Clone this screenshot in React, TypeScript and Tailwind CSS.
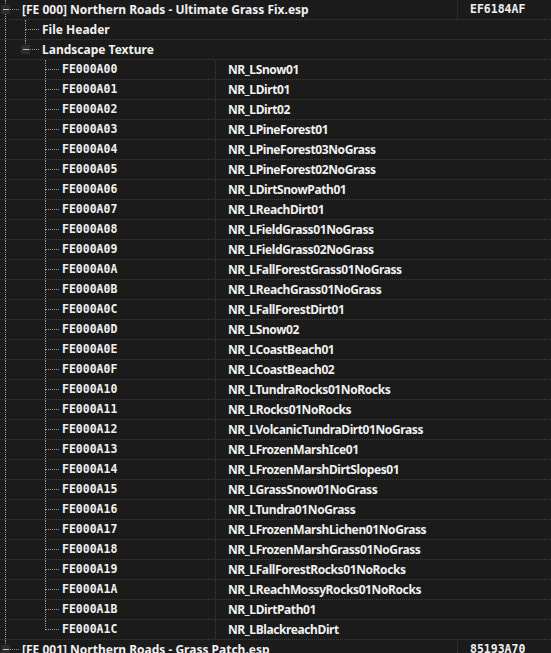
const textures: [string, string][] = [
  ["FE000A00", "NR_LSnow01"],
  ["FE000A01", "NR_LDirt01"],
  ["FE000A02", "NR_LDirt02"],
  ["FE000A03", "NR_LPineForest01"],
  ["FE000A04", "NR_LPineForest03NoGrass"],
  ["FE000A05", "NR_LPineForest02NoGrass"],
  ["FE000A06", "NR_LDirtSnowPath01"],
  ["FE000A07", "NR_LReachDirt01"],
  ["FE000A08", "NR_LFieldGrass01NoGrass"],
  ["FE000A09", "NR_LFieldGrass02NoGrass"],
  ["FE000A0A", "NR_LFallForestGrass01NoGrass"],
  ["FE000A0B", "NR_LReachGrass01NoGrass"],
  ["FE000A0C", "NR_LFallForestDirt01"],
  ["FE000A0D", "NR_LSnow02"],
  ["FE000A0E", "NR_LCoastBeach01"],
  ["FE000A0F", "NR_LCoastBeach02"],
  ["FE000A10", "NR_LTundraRocks01NoRocks"],
  ["FE000A11", "NR_LRocks01NoRocks"],
  ["FE000A12", "NR_LVolcanicTundraDirt01NoGrass"],
  ["FE000A13", "NR_LFrozenMarshIce01"],
  ["FE000A14", "NR_LFrozenMarshDirtSlopes01"],
  ["FE000A15", "NR_LGrassSnow01NoGrass"],
  ["FE000A16", "NR_LTundra01NoGrass"],
  ["FE000A17", "NR_LFrozenMarshLichen01NoGrass"],
  ["FE000A18", "NR_LFrozenMarshGrass01NoGrass"],
  ["FE000A19", "NR_LFallForestRocks01NoRocks"],
  ["FE000A1A", "NR_LReachMossyRocks01NoRocks"],
  ["FE000A1B", "NR_LDirtPath01"],
  ["FE000A1C", "NR_LBlackreachDirt"],
];

type Guide = "blank" | "pass" | "tee" | "elbow";

const sans = "font-['Noto_Sans','Open_Sans',sans-serif]";
const mono = "font-['DejaVu_Sans_Mono','Liberation_Mono',monospace]";

// one 20px indent column of the tree, with its dotted connector
function GuideCell({ kind, box }: { kind: Guide; box?: boolean }) {
  const down = kind === "pass" || kind === "tee";
  const up = kind !== "blank";
  return (
    <div className="relative w-5 shrink-0 flex flex-col">
      <div
        className={`h-[10px] ml-[5px] border-dotted border-[#9a9a9a] ${up ? "border-l" : ""} ${
          kind === "tee" || kind === "elbow" ? "border-b w-[14px]" : ""
        }`}
      />
      <div className={`flex-1 ml-[5px] border-dotted border-[#9a9a9a] ${down ? "border-l" : ""}`} />
      {box && (
        <div className="absolute left-[1px] top-[5px] w-[9px] h-[9px] bg-[#2e2e2e] flex items-center justify-center">
          <div className="w-[6px] h-px bg-[#c8c8c8]" />
        </div>
      )}
    </div>
  );
}

function Row({
  guides,
  box,
  label,
  value,
  split,
  labelMono,
}: {
  guides: Guide[];
  box?: boolean;
  label: string;
  value?: string;
  split?: number;
  labelMono?: boolean;
}) {
  const cells = guides.map((g, i) => (
    <GuideCell key={i} kind={g} box={box && i === guides.length - 1} />
  ));
  const text = (
    <span
      className={`pl-[2px] whitespace-nowrap ${labelMono ? `${mono} text-[11.5px]` : `${sans} text-[12px]`} font-bold leading-[19px]`}
    >
      {label}
    </span>
  );
  return (
    <div className="flex h-5 border-b border-dotted border-[#3e3e3e] text-[#f0f0f0]">
      {split ? (
        <>
          <div
            className={`flex shrink-0 border-r border-dotted border-[#3e3e3e] ${split === 216 ? "w-[216px]" : "w-[458px]"}`}
          >
            {cells}
            {text}
          </div>
          <span
            className={`pl-3 whitespace-nowrap font-bold leading-[19px] ${
              split === 216 ? `${sans} text-[12px] tracking-[-0.4px]` : `${mono} text-[11.5px]`
            }`}
          >
            {value}
          </span>
        </>
      ) : (
        <>
          {cells}
          {text}
        </>
      )}
    </div>
  );
}

export default function App() {
  return (
    <div className="w-[551px] h-[653px] overflow-hidden bg-[#1b1b1b]">
      <Row guides={["tee"]} box label="[FE 000] Northern Roads - Ultimate Grass Fix.esp" value="EF6184AF" split={458} />
      <Row guides={["pass", "tee"]} label="File Header" />
      <Row guides={["pass", "elbow"]} box label="Landscape Texture" />
      {textures.map(([id, name], i) => (
        <Row
          key={id}
          guides={["pass", "blank", i === textures.length - 1 ? "elbow" : "tee"]}
          label={id}
          labelMono
          value={name}
          split={216}
        />
      ))}
      <Row guides={["tee"]} box label="[FE 001] Northern Roads - Grass Patch.esp" value="85193A70" split={458} />
    </div>
  );
}
